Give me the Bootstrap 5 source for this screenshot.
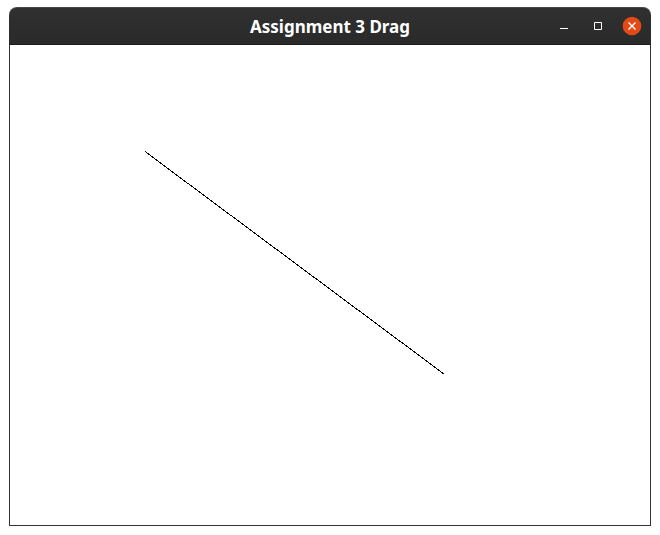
<!DOCTYPE html>
<html lang="en">
<head>
<meta charset="utf-8">
<meta name="viewport" content="width=device-width, initial-scale=1">
<title>Assignment 3 Drag</title>
<link href="https://cdn.jsdelivr.net/npm/bootstrap@5.3.0/dist/css/bootstrap.min.css" rel="stylesheet">
<style>
body { font-family: "Noto Sans", "Open Sans", sans-serif; background: #fff; padding: 7px 9px 9px; }
.app-window { border-radius: 8px 8px 0 0; }
.title-bar {
  display: grid; grid-template-columns: 1fr auto 1fr; height: 38px; padding: 0 2px;
  color: #fff; background: linear-gradient(#303030, #2a2a2a);
  border-top: 1px solid #484848; border-bottom: 1px solid #1c1c1c; border-radius: 8px 8px 0 0;
}
.title-text { font-size: 17px; line-height: 24px; font-weight: 700; padding-top: 2px; }
.win-btn { width: 34px; height: 36px; color: #fff; }
.canvas-area { border: 1px solid #333336; border-top: 0; }
</style>
<script src="https://cdn.jsdelivr.net/npm/bootstrap@5.3.0/dist/js/bootstrap.bundle.min.js"></script>
</head>
<body>
<main class="app-window">
  <header class="title-bar align-items-center">
    <span></span>
    <h1 class="title-text m-0">Assignment 3 Drag</h1>
    <div class="d-flex justify-content-end">
      <button type="button" class="win-btn border-0 bg-transparent p-0 d-flex align-items-center justify-content-center" aria-label="Minimize">
        <svg width="20" height="20" viewBox="0 0 20 20" aria-hidden="true"><path d="M6 12h8v1H6z" fill="currentColor"/></svg>
      </button>
      <button type="button" class="win-btn border-0 bg-transparent p-0 d-flex align-items-center justify-content-center" aria-label="Maximize">
        <svg width="20" height="20" viewBox="0 0 20 20" aria-hidden="true"><path d="M6.500 6.500h7v7h-7z" fill="none" stroke="currentColor"/></svg>
      </button>
      <button type="button" class="win-btn border-0 bg-transparent p-0 d-flex align-items-center justify-content-center" aria-label="Close">
        <svg width="20" height="20" viewBox="0 0 20 20" aria-hidden="true"><circle cx="10" cy="10" r="9.300" fill="#e24a17"/><path d="M6.500 6.500l7 7M13.500 6.500l-7 7" stroke="currentColor" stroke-width="1.400"/></svg>
      </button>
    </div>
  </header>
  <section class="canvas-area bg-white" aria-label="Drawing area">
    <svg class="d-block w-100" viewBox="0 0 640 480" role="img" aria-label="Diagonal line" shape-rendering="crispEdges">
      <line x1="135" y1="106.500" x2="434" y2="329" stroke="#000" stroke-width="1"/>
    </svg>
  </section>
</main>
</body>
</html>
